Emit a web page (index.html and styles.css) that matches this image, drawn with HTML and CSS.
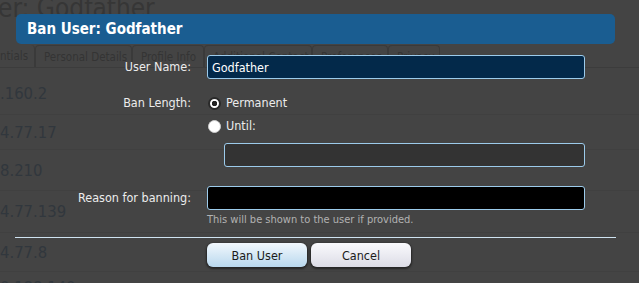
FILE: index.html
```html
<!DOCTYPE html>
<html>
<head>
<meta charset="utf-8">
<link rel="stylesheet" href="styles.css">
</head>
<body>
<div class="page">
  <h1 class="page-title">er: Godfather</h1>
  <ul class="tabs">
    <li class="tab first">ntials</li>
    <li class="tab">Personal Details</li>
    <li class="tab">Profile Info</li>
    <li class="tab">Additional Contact</li>
    <li class="tab">Preferences</li>
    <li class="tab">Privacy</li>
  </ul>
  <div class="rows">
    <div class="row r1">.160.2</div>
    <div class="row r2">4.77.17</div>
    <div class="row r3">8.210</div>
    <div class="row r4">4.77.139</div>
    <div class="row r5">4.77.8</div>
    <div class="row r6">0.188.140</div>
  </div>
</div>

<div class="dialog">
  <div class="dialog-title">Ban User: Godfather</div>
  <form class="form">
    <label class="label l-user">User Name:</label>
    <div class="field"><input class="input input-user" type="text" value="Godfather"></div>

    <label class="label l-len">Ban Length:</label>
    <div class="field radios">
      <label class="radio"><input type="radio" name="len" checked><span>Permanent</span></label>
      <label class="radio"><input type="radio" name="len"><span>Until:</span></label>
      <input class="input input-date" type="text">
    </div>

    <label class="label l-reason">Reason for banning:</label>
    <div class="field">
      <input class="input input-reason" type="text">
      <div class="hint">This will be shown to the user if provided.</div>
    </div>
  </form>
  <div class="divider"></div>
  <div class="buttons">
    <button class="btn btn-primary" type="button">Ban User</button>
    <button class="btn btn-cancel" type="button">Cancel</button>
  </div>
</div>
</body>
</html>
```

FILE: styles.css
```css
html, body {
  margin: 0;
  padding: 0;
  background: #444444;
  width: 639px;
  height: 283px;
  overflow: hidden;
  font-family: "DejaVu Sans Condensed", "DejaVu Sans", sans-serif;
}

.page {
  color: #35393d;
  height: 283px;
  overflow: hidden;
}

.page-title {
  margin: -7px 0 0 -2px;
  font-size: 26px;
  font-weight: normal;
  line-height: 30px;
  height: 52px;
  color: #363636;
  white-space: nowrap;
}

.tabs {
  list-style: none;
  margin: 0;
  padding: 0;
  display: flex;
  height: 22px;
  border-bottom: 1px solid #3c3c3c;
  font-size: 11.5px;
}

.tab {
  border: 1px solid #3a3a3a;
  border-bottom: none;
  border-radius: 4px 4px 0 0;
  padding: 3px 0 0 8px;
  color: #343434;
  line-height: 17px;
  box-sizing: border-box;
  white-space: nowrap;
  overflow: hidden;
  flex: none;
}
.tab:nth-child(2) { width: 97px; }
.tab:nth-child(3) { width: 72px; }
.tab:nth-child(4) { width: 108px; }
.tab:nth-child(5) { width: 76px; }
.tab:nth-child(6) { width: 52px; }
.tab.first {
  border-left: none;
  border-top: none;
  padding-left: 0;
  width: 35px;
}

.rows {
  font-size: 16.5px;
}
.row {
  border-bottom: 1px solid #404040;
  display: flex;
  align-items: center;
  color: #31373d;
}
.r1 { height: 47px; padding-top: 4px; box-sizing: border-box; }
.r2 { height: 34px; }
.r3 { height: 40px; }
.r4 { height: 41px; }
.r5 { height: 38px; }
.r6 { height: 30px; }

.dialog {
  position: absolute;
  left: 15px;
  top: 14px;
  width: 601px;
}

.dialog-title {
  margin: 0 1px;
  height: 30px;
  background: #1a5d91;
  border-radius: 5px;
  color: #ffffff;
  font-weight: bold;
  font-size: 15px;
  line-height: 30px;
  padding-left: 11px;
}

.form {
  display: grid;
  grid-template-columns: 176px 378px;
  column-gap: 16px;
  margin: 11px 0 0 0;
  font-size: 12.5px;
  color: #ececec;
}

.label {
  text-align: right;
  line-height: 24px;
}
.l-len { margin-top: 12px; }
.l-reason { margin-top: 19px; }

.input {
  box-sizing: border-box;
  display: block;
  width: 378px;
  height: 24px;
  border: 1px solid #9ccbeb;
  border-radius: 3px;
  color: #ffffff;
  font-family: inherit;
  font-size: 12.5px;
  padding: 0 4px;
  margin: 0;
  outline: none;
}
.input-user { background: #03294a; }
.input-date { background: #333333; width: 361px; margin: 5px 0 0 17px; }
.input-reason { background: #000000; margin-top: 19px; }

.radios {
  margin-top: 12px;
}
.radio {
  display: flex;
  align-items: center;
  height: 24px;
  line-height: 24px;
}
.radio + .radio { margin-top: -1px; }
.radio input {
  appearance: none;
  -webkit-appearance: none;
  width: 13px;
  height: 13px;
  margin: 0 5px 0 1px;
  border-radius: 50%;
  background: #ffffff;
  border: 1px solid #cfcfcf;
  box-sizing: border-box;
}
.radio input:checked {
  border: 2px solid #2a2a2a;
  background: radial-gradient(circle, #222 0 2.5px, #fff 3px);
}

.hint {
  font-size: 11px;
  color: #b2b2b2;
  margin-top: 3px;
  line-height: 14px;
}

.divider {
  margin-top: 10px;
  height: 1px;
  background: #cfe3f1;
}

.buttons {
  display: flex;
  gap: 4px;
  margin: 5px 0 0 192px;
}
.btn {
  width: 100px;
  height: 24px;
  border: none;
  border-radius: 6px;
  font-family: inherit;
  font-size: 12.5px;
  color: #1a1a1a;
  box-shadow: 0 1px 2px 1px rgba(0,0,0,0.45);
  padding: 0;
}
.btn-primary {
  background: linear-gradient(#f2f8fd, #b9d8ee);
}
.btn-cancel {
  background: linear-gradient(#fafafd, #dcdce6);
}
```
